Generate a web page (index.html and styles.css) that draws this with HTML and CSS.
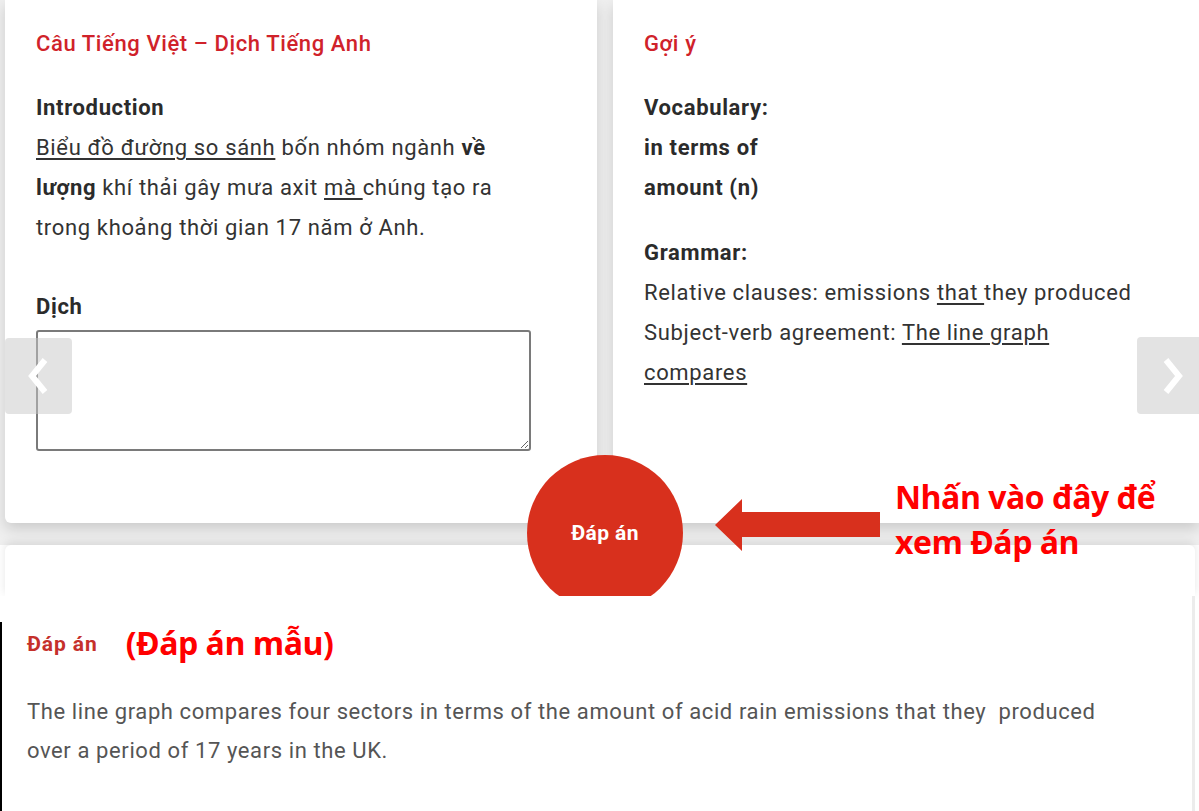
FILE: index.html
```html
<!DOCTYPE html>
<html lang="vi">
<head>
<meta charset="utf-8">
<title>Đáp án</title>
<link rel="stylesheet" href="styles.css">
</head>
<body>
<div class="page">
  <section class="top">
    <div class="card card-left">
      <h2 class="card-title">Câu Tiếng Việt – Dịch Tiếng Anh</h2>
      <div class="block block-intro">
        <p class="strong">Introduction</p>
        <p><u>Biểu đồ đường so sánh</u> bốn nhóm ngành <b>về lượng</b> khí thải gây mưa axit <u>mà </u>chúng tạo ra trong khoảng thời gian 17 năm ở Anh.</p>
      </div>
      <p class="strong label">Dịch</p>
      <textarea class="answer-input"></textarea>
    </div>
    <div class="card card-right">
      <h2 class="card-title">Gợi ý</h2>
      <div class="block">
        <p class="strong">Vocabulary:</p>
        <p class="strong">in terms of</p>
        <p class="strong">amount (n)</p>
      </div>
      <div class="block block-grammar">
        <p class="strong">Grammar:</p>
        <p>Relative clauses: emissions <u>that </u>they produced</p>
        <p>Subject-verb agreement: <u>The line graph compares</u></p>
      </div>
    </div>
  </section>
  <div class="next-card"></div>
  <section class="answer-panel">
    <div class="answer-head">
      <span class="answer-title">Đáp án</span>
      <span class="note note-sample">(Đáp án mẫu)</span>
    </div>
    <p class="answer-text">The line graph compares four sectors in terms of the amount of acid rain emissions that they&nbsp; produced over a period of 17 years in the UK.</p>
  </section>

  <button class="nav nav-prev" aria-label="Trước">
    <svg width="30" height="40" viewBox="0 0 30 40"><polyline points="21,4 8,20 21,36" fill="none" stroke="#fff" stroke-width="6" stroke-linejoin="miter"/></svg>
  </button>
  <button class="nav nav-next" aria-label="Sau">
    <svg width="30" height="40" viewBox="0 0 30 40"><polyline points="9,4 22,20 9,36" fill="none" stroke="#fff" stroke-width="6" stroke-linejoin="miter"/></svg>
  </button>

  <button class="reveal">Đáp án</button>
  <svg class="arrow" width="166" height="54" viewBox="0 0 166 54"><polygon points="0,26 27,0 27,13 165,13 165,38 27,38 27,52" fill="#d8301d"/></svg>
  <div class="note note-click">Nhấn vào đây để<br>xem Đáp án</div>
</div>
</body>
</html>
```
FILE: styles.css
```css
* { box-sizing: border-box; }
html, body { margin: 0; padding: 0; }
body {
  font-family: Roboto, "Noto Sans", Arial, sans-serif;
  background: #ffffff;
  color: #333;
  width: 1199px;
  height: 811px;
  overflow: hidden;
}
.page {
  position: relative;
  width: 1199px;
  height: 811px;
  overflow: hidden;
}
.top {
  display: flex;
  gap: 16px;
  padding: 0 0 22px 5px;
  background: #efefef;
}
.card {
  background: #fff;
  height: 523px;
  border-radius: 0 0 6px 6px;
  box-shadow: 0 6px 14px rgba(0,0,0,0.15);
  padding: 24px 31px 0;
}
.card-left { width: 592px; }
.card-right { flex: 1; border-radius: 0 0 0 6px; padding-left: 31px; padding-right: 55px; }
.card-title {
  margin: 0;
  font-size: 22px;
  font-weight: 500;
  line-height: 40px;
  letter-spacing: 0.6px;
  color: #d0222a;
}
.block { margin-top: 24px; }
.block-intro { width: 492px; }
.block-grammar { margin-top: 25px; }
p {
  margin: 0;
  font-size: 22px;
  line-height: 40px;
  letter-spacing: 0.65px;
  color: #333;
}
.strong, b { font-weight: 700; color: #2b2b2b; }
u { text-underline-offset: 3px; }
.label { margin-top: 39px; }
.answer-input {
  display: block;
  margin-top: 3px;
  width: 495px;
  height: 121px;
  border: 2px solid #7a7a7a;
  border-radius: 3px;
  background: #fff;
  resize: vertical;
}
.next-card {
  margin: 0 4px 0 5px;
  height: 51px;
  background: #fff;
  box-shadow: 0 -3px 10px rgba(0,0,0,0.10);
  border-radius: 6px 6px 0 0;
}
.answer-panel {
  position: relative;
  z-index: 3;
  width: 1195px;
  height: 215px;
  background: #fff;
  border-right: 3px solid #ececec;
  padding: 26px 0 0 27px;
}
.answer-panel::before {
  content: "";
  position: absolute;
  left: 0;
  top: 26px;
  bottom: 0;
  width: 2px;
  background: #000;
}
.answer-head {
  display: flex;
  align-items: center;
  gap: 28px;
  height: 40px;
}
.answer-title {
  font-size: 21px;
  font-weight: 700;
  letter-spacing: 0.9px;
  color: #c5302b;
  margin-top: 4px;
}
.note {
  font-family: "Open Sans", "Noto Sans", Arial, sans-serif;
  font-weight: 700;
  color: #ff0000;
}
.note-sample { font-size: 32px; letter-spacing: -0.5px; }
.answer-text {
  margin-top: 30px;
  width: 1090px;
  font-size: 22px;
  line-height: 39px;
  letter-spacing: 0.6px;
  color: #555;
}
.nav {
  position: absolute;
  z-index: 4;
  border: 0;
  padding: 0;
  border-radius: 4px;
  background: rgba(200,200,200,0.5);
  display: flex;
  align-items: center;
  justify-content: center;
}
.nav-prev { left: 5px; top: 338px; width: 67px; height: 76px; }
.nav-next { left: 1137px; top: 337px; width: 70px; height: 77px; justify-content: flex-start; padding-left: 20px; }
.reveal {
  position: absolute;
  z-index: 2;
  left: 527px;
  top: 455px;
  width: 156px;
  height: 156px;
  border-radius: 50%;
  border: 0;
  background: #d8301d;
  color: #fff;
  font-family: Roboto, Arial, sans-serif;
  font-weight: 700;
  font-size: 21px;
  letter-spacing: 0.4px;
  padding: 0;
}
.arrow {
  position: absolute;
  z-index: 2;
  left: 715px;
  top: 499px;
}
.note-click {
  position: absolute;
  z-index: 2;
  left: 895px;
  top: 474px;
  font-size: 32px;
  line-height: 45px;
  letter-spacing: -0.5px;
}
```
